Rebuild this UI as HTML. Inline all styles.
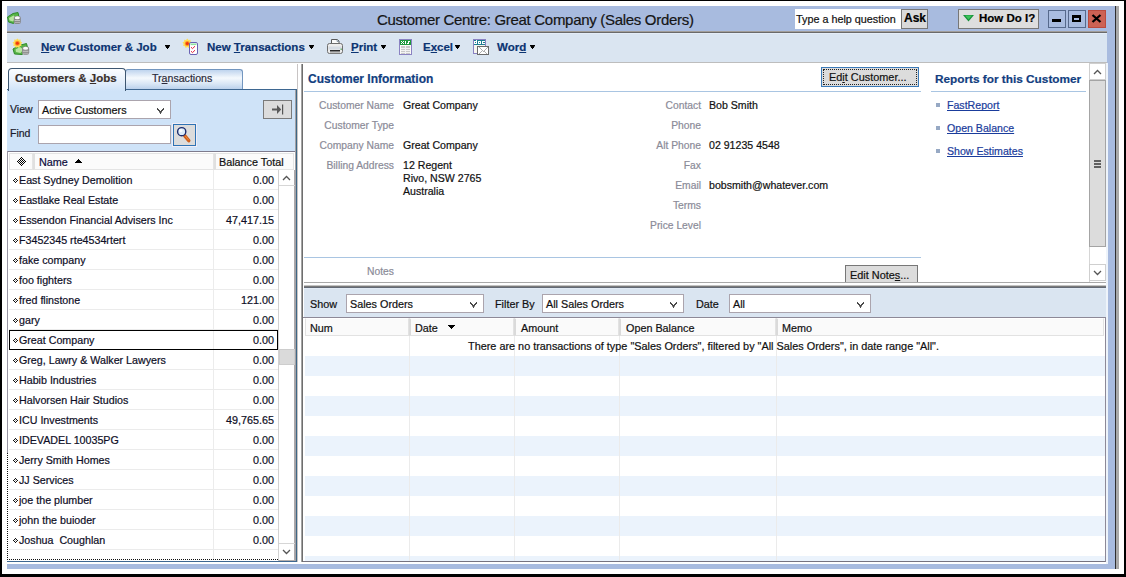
<!DOCTYPE html>
<html><head><meta charset="utf-8">
<style>
*{margin:0;padding:0;box-sizing:border-box}
html,body{width:1126px;height:577px;overflow:hidden;background:#fff;font-family:"Liberation Sans",sans-serif;font-size:11px;color:#111}
.a{position:absolute}
.t{position:absolute;white-space:nowrap;line-height:13px;-webkit-text-stroke:0.2px currentColor}
u{text-decoration:underline;text-underline-offset:1px;text-decoration-skip-ink:none}
</style></head><body>
<div class="a" style="left:0px;top:0px;width:1126px;height:1px;background:#000"></div>
<div class="a" style="left:0px;top:0px;width:2px;height:577px;background:#000"></div>
<div class="a" style="left:1124px;top:0px;width:2px;height:577px;background:#000"></div>
<div class="a" style="left:0px;top:574px;width:1126px;height:3px;background:#000"></div>
<div class="a" style="left:7px;top:6px;width:1109px;height:563px;background:#a8bbdf"></div>
<div class="a" style="left:1115px;top:6px;width:1px;height:563px;background:#2e2e2e"></div>
<div class="a" style="left:1116px;top:6px;width:3px;height:563px;background:#a9a9a9"></div>
<div class="a" style="left:7px;top:31px;width:1100px;height:1px;background:#a29e9a"></div>
<div class="a" style="left:7px;top:32px;width:1100px;height:1px;background:#6a6a6a"></div>
<svg class="a" style="left:7px;top:11px;" width="15" height="14" viewBox="0 0 15 14">
<path d="M1.5 11 L0.5 6 L6 2.5 L11 1.5 L12 6.5 L6.5 12.5 Z" fill="#58b446" stroke="#2f8a2a" stroke-width="1"/>
<path d="M2.5 9.5 L2 7 L6.5 4.5 L9 6.5 L6 10.5 Z" fill="#b8e6a0"/>
<rect x="6.8" y="5" width="7" height="8" rx="2" fill="#868686"/>
<ellipse cx="10.3" cy="6.8" rx="2.6" ry="1.5" fill="#fafafa"/>
<rect x="7.6" y="9.2" width="5.4" height="0.9" fill="#cfcfcf"/>
<rect x="7.6" y="11.2" width="5.4" height="0.9" fill="#bdbdbd"/>
</svg>
<div class="t" style="left:377px;top:13px;font-size:15px;color:#151515;letter-spacing:-0.3px">Customer Centre: Great Company (Sales Orders)</div>
<div class="a" style="left:795px;top:9px;width:106px;height:20px;background:#fff"></div>
<div class="t" style="left:796px;top:13px;font-size:10.8px;color:#111;">Type a help question</div>
<div class="a" style="left:901px;top:9px;width:27px;height:20px;background:#dadada;border:1px solid #777"></div>
<div class="t" style="left:904px;top:12px;font-size:12px;color:#000;font-weight:bold;">Ask</div>
<div class="a" style="left:958px;top:9px;width:81px;height:20px;background:#dedede;border:1px solid #777"></div>
<svg class="a" style="left:963px;top:15px;" width="11" height="7" viewBox="0 0 11 7"><path d="M0 0 L11 0 L5.5 6.5 Z" fill="#17923a"/><path d="M2 0.5 L9 0.5 L5.5 4.5 Z" fill="#3cc35a"/></svg>
<div class="t" style="left:979px;top:12px;font-size:11.5px;color:#000;font-weight:bold;">How Do I?</div>
<div class="a" style="left:1048px;top:10px;width:18px;height:18px;background:#a9bce0;border:1px solid #56698c"></div>
<div class="a" style="left:1068px;top:10px;width:18px;height:18px;background:#a9bce0;border:1px solid #56698c"></div>
<div class="a" style="left:1088px;top:10px;width:18px;height:18px;background:#cd6254;border:1px solid #bb4a3e"></div>
<div class="a" style="left:1052px;top:19px;width:9px;height:3px;background:#000"></div>
<div class="a" style="left:1072px;top:15px;width:9px;height:7px;border:2px solid #000;border-top-width:3px;background:#a9bce0"></div>
<svg class="a" style="left:1091px;top:14px;" width="11" height="9" viewBox="0 0 11 9"><path d="M1.5 1 L9.5 8 M9.5 1 L1.5 8" stroke="#000" stroke-width="2.3"/></svg>
<div class="a" style="left:7px;top:33px;width:1100px;height:29px;background:#dae5f1"></div>
<div class="a" style="left:7px;top:33px;width:1100px;height:1px;background:#e4edf8"></div>
<div class="a" style="left:7px;top:62px;width:1100px;height:1px;background:#bdbdbd"></div>
<div class="a" style="left:7px;top:63px;width:1100px;height:501px;background:#fff"></div>
<svg class="a" style="left:10px;top:36px;" width="22" height="22" viewBox="0 0 22 22">
<path d="M4.5 18 L3 13 L9 9.5 L16.5 7.5 L18 13.5 L12 18.5 Z" fill="#58b446" stroke="#2f8a2a" stroke-width="1"/>
<path d="M6 16 L5.5 13.5 L10 11 L13.5 13.5 L10.5 17 Z" fill="#b8e6a0"/>
<polygon points="7.40,2.40 8.67,3.82 10.55,3.55 10.60,5.45 12.23,6.45 11.04,7.94 11.64,9.75 9.78,10.13 9.08,11.90 7.40,11.00 5.72,11.90 5.02,10.13 3.16,9.75 3.76,7.94 2.57,6.45 4.20,5.45 4.25,3.55 6.13,3.82" fill="#ffdc55"/><circle cx="7.4" cy="7.3" r="2.5" fill="#ff9426"/><circle cx="7.4" cy="7.3" r="1.5" fill="#ee3510"/>
<rect x="12" y="10.5" width="7.2" height="8.2" rx="2.2" fill="#8a8a8a"/>
<ellipse cx="15.6" cy="12.3" rx="2.6" ry="1.5" fill="#fafafa"/>
<rect x="12.8" y="14.8" width="5.6" height="0.9" fill="#d0d0d0"/>
<rect x="12.8" y="16.8" width="5.6" height="0.9" fill="#bdbdbd"/>
</svg>
<div class="t" style="left:41px;top:41px;font-size:11.5px;color:#0c3472;font-weight:bold;"><u>N</u>ew Customer &amp; Job</div>
<svg class="a" style="left:165px;top:45px;" width="5" height="4" viewBox="0 0 5 4"><rect x="0" y="0" width="5" height="1" fill="#000"/><rect x="0.5" y="1" width="4" height="1" fill="#000"/><rect x="1" y="2" width="3" height="1" fill="#000"/><rect x="2" y="3" width="1" height="1" fill="#000"/></svg>
<svg class="a" style="left:182px;top:38px;" width="18" height="18" viewBox="0 0 18 18">
<polygon points="5.30,0.50 6.57,1.92 8.45,1.65 8.50,3.55 10.13,4.55 8.94,6.04 9.54,7.85 7.68,8.23 6.98,10.00 5.30,9.10 3.62,10.00 2.92,8.23 1.06,7.85 1.66,6.04 0.47,4.55 2.10,3.55 2.15,1.65 4.03,1.92" fill="#ffdc55"/><circle cx="5.3" cy="5.4" r="2.5" fill="#ff9426"/><circle cx="5.3" cy="5.4" r="1.5" fill="#ee3510"/>
<rect x="7.5" y="4.5" width="8" height="12" rx="1.5" fill="#fff" stroke="#6a62b4" stroke-width="1"/>
<rect x="8.5" y="5.5" width="6" height="1.6" fill="#8fe3a2"/>
<path d="M9 9.2 L10.5 10.6 L13 8.2 M9 13.2 L10.5 14.6 L13 12.2" stroke="#e0203e" stroke-width="1" fill="none"/>
</svg>
<div class="t" style="left:207px;top:41px;font-size:11.5px;color:#0c3472;font-weight:bold;">New <u>T</u>ransactions</div>
<svg class="a" style="left:309px;top:45px;" width="5" height="4" viewBox="0 0 5 4"><rect x="0" y="0" width="5" height="1" fill="#000"/><rect x="0.5" y="1" width="4" height="1" fill="#000"/><rect x="1" y="2" width="3" height="1" fill="#000"/><rect x="2" y="3" width="1" height="1" fill="#000"/></svg>
<svg class="a" style="left:324px;top:36px;" width="22" height="22" viewBox="0 0 22 22">
<path d="M7.5 3.5 L13.5 3.5 L15 5 L15 9 L7.5 9 Z" fill="#fbfbfb" stroke="#5a5a5a" stroke-width="1"/>
<path d="M13 3.5 L13 5.5 L15 5.5" fill="#c8d2dc" stroke="#6a7a8a" stroke-width="0.6"/>
<rect x="3.5" y="7.5" width="15" height="10" rx="2" fill="#ececec" stroke="#6e6e6e" stroke-width="1"/>
<rect x="4.5" y="10.5" width="13" height="3" fill="#d6dce4"/>
<rect x="6" y="14" width="10" height="1.6" fill="#2a2a2a"/>
<rect x="6" y="15.8" width="10" height="1.4" fill="#bdbdbd"/>
<rect x="16.6" y="12.6" width="1.2" height="1.2" fill="#3a9a3a"/>
</svg>
<div class="t" style="left:351px;top:41px;font-size:11.5px;color:#0c3472;font-weight:bold;"><u>P</u>rint</div>
<svg class="a" style="left:381px;top:45px;" width="5" height="4" viewBox="0 0 5 4"><rect x="0" y="0" width="5" height="1" fill="#000"/><rect x="0.5" y="1" width="4" height="1" fill="#000"/><rect x="1" y="2" width="3" height="1" fill="#000"/><rect x="2" y="3" width="1" height="1" fill="#000"/></svg>
<svg class="a" style="left:399px;top:39px;shape-rendering:crispEdges" width="13" height="16" viewBox="0 0 13 16">
<rect x="0.5" y="0.5" width="12" height="15" fill="#fbfaf6" stroke="#8a82c2" stroke-width="1"/>
<rect x="1" y="1" width="11" height="5" fill="#1f9a3c"/>
<rect x="2" y="2" width="1" height="1" fill="#fff"/><rect x="4" y="2" width="1" height="1" fill="#fff"/><rect x="3" y="3" width="1" height="1" fill="#fff"/><rect x="2" y="4" width="1" height="1" fill="#fff"/><rect x="4" y="4" width="1" height="1" fill="#fff"/>
<rect x="6" y="1.6" width="1" height="3.4" fill="#fff"/>
<rect x="9" y="2" width="2" height="1" fill="#fff"/><rect x="9" y="3" width="1" height="1" fill="#fff"/><rect x="8" y="4" width="2" height="1" fill="#fff"/>
<rect x="2" y="7" width="9" height="8" fill="#c9c9c9"/>
<rect x="2" y="9" width="9" height="1" fill="#f2f2f2"/>
<rect x="2" y="11" width="9" height="1" fill="#f2f2f2"/>
<rect x="2" y="13" width="9" height="1" fill="#f2f2f2"/>
<rect x="6" y="7" width="1" height="8" fill="#f2f2f2"/>
</svg>
<div class="t" style="left:423px;top:41px;font-size:11.5px;color:#0c3472;font-weight:bold;">E<u>x</u>cel</div>
<svg class="a" style="left:455px;top:45px;" width="5" height="4" viewBox="0 0 5 4"><rect x="0" y="0" width="5" height="1" fill="#000"/><rect x="0.5" y="1" width="4" height="1" fill="#000"/><rect x="1" y="2" width="3" height="1" fill="#000"/><rect x="2" y="3" width="1" height="1" fill="#000"/></svg>
<svg class="a" style="left:473px;top:39px;shape-rendering:crispEdges" width="16" height="16" viewBox="0 0 16 16">
<rect x="0.5" y="0.5" width="12" height="14" fill="#f8f6f0" stroke="#8a82c2" stroke-width="1"/>
<rect x="1" y="1" width="11" height="5" fill="#1e7f92"/>
<rect x="3" y="1" width="1" height="1" fill="#fff"/><rect x="3" y="2" width="1" height="1" fill="#fff"/><rect x="1" y="2" width="1" height="1" fill="#fff"/><rect x="2" y="2" width="1" height="1" fill="#fff"/><rect x="1" y="3" width="1" height="1" fill="#fff"/><rect x="3" y="3" width="1" height="1" fill="#fff"/><rect x="1" y="4" width="1" height="1" fill="#fff"/><rect x="2" y="4" width="1" height="1" fill="#fff"/><rect x="3" y="4" width="1" height="1" fill="#fff"/><rect x="5" y="2" width="1" height="1" fill="#fff"/><rect x="6" y="2" width="1" height="1" fill="#fff"/><rect x="7" y="2" width="1" height="1" fill="#fff"/><rect x="5" y="3" width="1" height="1" fill="#fff"/><rect x="7" y="3" width="1" height="1" fill="#fff"/><rect x="5" y="4" width="1" height="1" fill="#fff"/><rect x="6" y="4" width="1" height="1" fill="#fff"/><rect x="7" y="4" width="1" height="1" fill="#fff"/><rect x="9" y="2" width="1" height="1" fill="#fff"/><rect x="10" y="2" width="1" height="1" fill="#fff"/><rect x="11" y="2" width="1" height="1" fill="#fff"/><rect x="9" y="3" width="1" height="1" fill="#fff"/><rect x="9" y="4" width="1" height="1" fill="#fff"/><rect x="10" y="4" width="1" height="1" fill="#fff"/><rect x="11" y="4" width="1" height="1" fill="#fff"/>
<rect x="4.5" y="7.5" width="11" height="8" fill="#fff" stroke="#6a6a6a" stroke-width="1"/>
<path d="M5.5 8.5 L10 12.5 L14.5 8.5 M5.5 14.5 L8.5 11.5 M14.5 14.5 L11.5 11.5" stroke="#9a9a9a" stroke-width="0.8" fill="none"/>
</svg>
<div class="t" style="left:497px;top:41px;font-size:11.5px;color:#0c3472;font-weight:bold;">Wor<u>d</u></div>
<svg class="a" style="left:530px;top:45px;" width="5" height="4" viewBox="0 0 5 4"><rect x="0" y="0" width="5" height="1" fill="#000"/><rect x="0.5" y="1" width="4" height="1" fill="#000"/><rect x="1" y="2" width="3" height="1" fill="#000"/><rect x="2" y="3" width="1" height="1" fill="#000"/></svg>
<div class="a" style="left:125px;top:69px;width:118px;height:21px;border:1px solid #7396bf;border-bottom:none;border-radius:3px 3px 0 0;background:linear-gradient(#bfd4ee 0%,#f5f9fd 40%,#d8e6f5 70%,#b6cdea 100%)"></div>
<div class="t" style="left:152px;top:72px;font-size:10.6px;color:#2b2b3b;">Tr<u>a</u>nsactions</div>
<div class="a" style="left:7px;top:89px;width:290px;height:473px;background:#cfe3f8;border-top:1px solid #3e6791;border-right:1px solid #3e6785;border-bottom:1px solid #3e6791"></div>
<div class="a" style="left:8px;top:68px;width:118px;height:23px;border:1px solid #3d5670;border-bottom:none;border-radius:4px 4px 0 0;background:linear-gradient(#fbfdff 0%,#e6f0fb 55%,#cfe3f8 100%)"></div>
<div class="t" style="left:15px;top:72px;font-size:11.5px;color:#392f2b;font-weight:bold;">Customers &amp; <u>J</u>obs</div>
<div class="t" style="left:10px;top:103px;font-size:10.5px;color:#1a1a2a;">View</div>
<div class="a" style="left:38px;top:100px;width:133px;height:19px;background:#fff;border:1px solid #aba4ad"></div>
<div class="t" style="left:42px;top:104px;font-size:10.8px;color:#111;">Active Customers</div>
<svg class="a" style="left:157px;top:108px;shape-rendering:crispEdges" width="7" height="6" viewBox="0 0 7 6"><rect x="0" y="0" width="1" height="1" fill="#4a4a4a"/><rect x="6" y="0" width="1" height="1" fill="#4a4a4a"/><rect x="0" y="1" width="1" height="1" fill="#4a4a4a"/><rect x="1" y="1" width="1" height="1" fill="#4a4a4a"/><rect x="5" y="1" width="1" height="1" fill="#4a4a4a"/><rect x="6" y="1" width="1" height="1" fill="#4a4a4a"/><rect x="1" y="2" width="1" height="1" fill="#4a4a4a"/><rect x="2" y="2" width="1" height="1" fill="#4a4a4a"/><rect x="4" y="2" width="1" height="1" fill="#4a4a4a"/><rect x="5" y="2" width="1" height="1" fill="#4a4a4a"/><rect x="2" y="3" width="1" height="1" fill="#4a4a4a"/><rect x="3" y="3" width="1" height="1" fill="#4a4a4a"/><rect x="4" y="3" width="1" height="1" fill="#4a4a4a"/><rect x="3" y="4" width="1" height="1" fill="#4a4a4a"/><rect x="3" y="5" width="1" height="1" fill="#4a4a4a"/><rect x="2" y="4" width="1" height="1" fill="#9a9a9a"/><rect x="4" y="4" width="1" height="1" fill="#9a9a9a"/></svg>
<div class="a" style="left:263px;top:100px;width:29px;height:19px;background:#dcdcdc;border:1px solid #7a7a7a"></div>
<svg class="a" style="left:271px;top:103px;" width="13" height="13" viewBox="0 0 13 13"><rect x="1" y="5.5" width="6" height="2" fill="#5a5a5a"/><path d="M6 2 L10.2 6.5 L6 11 Z" fill="#5a5a5a"/><rect x="11" y="1.5" width="1.2" height="10" fill="#555"/></svg>
<div class="t" style="left:10px;top:127px;font-size:10.5px;color:#1a1a2a;">Find</div>
<div class="a" style="left:38px;top:125px;width:133px;height:19px;background:#fff;border:1px solid #aba4ad"></div>
<div class="a" style="left:172px;top:123px;width:25px;height:24px;background:#f1edf5"></div>
<div class="a" style="left:173px;top:124px;width:23px;height:22px;background:#dcdcdc;border:1px solid #2e73b5"></div>
<svg class="a" style="left:176px;top:126px;" width="18" height="18" viewBox="0 0 18 18">
<path d="M8.6 9.6 L12.8 14.6" stroke="#cf5f1c" stroke-width="3.4" stroke-linecap="round"/>
<path d="M9.4 10.2 L12.4 13.8" stroke="#f08a3a" stroke-width="1" stroke-linecap="round"/>
<circle cx="5.7" cy="5.7" r="4.1" fill="#dcecf9" stroke="#1b2a6c" stroke-width="1.4"/>
<circle cx="4.8" cy="4.6" r="1.7" fill="#fff" opacity="0.85"/>
</svg>
<div class="a" style="left:7px;top:151px;width:288px;height:410px;background:#fff"></div>
<div class="a" style="left:295px;top:90px;width:1px;height:471px;background:#a4a2a6"></div>
<div class="a" style="left:7px;top:151px;width:288px;height:1px;background:#7e7b8d"></div>
<div class="a" style="left:7px;top:151px;width:1px;height:302px;background:#9895a3"></div>
<div class="a" style="left:9px;top:153px;width:24px;height:17px;background:#fbfbfb;border:1px solid #e4e4e4"></div>
<div class="a" style="left:33px;top:153px;width:181px;height:17px;background:#fbfbfb;border:1px solid #e4e4e4;border-left:2px solid #e0e0e0"></div>
<div class="a" style="left:214px;top:153px;width:80px;height:17px;background:#fbfbfb;border:1px solid #e4e4e4;border-left:2px solid #e0e0e0"></div>
<svg class="a" style="left:17px;top:157px;shape-rendering:crispEdges" width="9" height="9" viewBox="0 0 9 9"><rect x="4" y="0" width="1" height="1" fill="#000"/><rect x="3" y="1" width="1" height="1" fill="#000"/><rect x="5" y="1" width="1" height="1" fill="#000"/><rect x="2" y="2" width="1" height="1" fill="#000"/><rect x="4" y="2" width="1" height="1" fill="#000"/><rect x="6" y="2" width="1" height="1" fill="#000"/><rect x="1" y="3" width="1" height="1" fill="#000"/><rect x="3" y="3" width="1" height="1" fill="#000"/><rect x="5" y="3" width="1" height="1" fill="#000"/><rect x="7" y="3" width="1" height="1" fill="#000"/><rect x="0" y="4" width="1" height="1" fill="#000"/><rect x="2" y="4" width="1" height="1" fill="#000"/><rect x="4" y="4" width="1" height="1" fill="#000"/><rect x="6" y="4" width="1" height="1" fill="#000"/><rect x="8" y="4" width="1" height="1" fill="#000"/><rect x="1" y="5" width="1" height="1" fill="#000"/><rect x="3" y="5" width="1" height="1" fill="#000"/><rect x="5" y="5" width="1" height="1" fill="#000"/><rect x="7" y="5" width="1" height="1" fill="#000"/><rect x="2" y="6" width="1" height="1" fill="#000"/><rect x="4" y="6" width="1" height="1" fill="#000"/><rect x="6" y="6" width="1" height="1" fill="#000"/><rect x="3" y="7" width="1" height="1" fill="#000"/><rect x="5" y="7" width="1" height="1" fill="#000"/><rect x="4" y="8" width="1" height="1" fill="#000"/></svg>
<div class="t" style="left:39px;top:156px;font-size:10.8px;color:#0c0c3c;">Name</div>
<svg class="a" style="left:75px;top:159px;shape-rendering:crispEdges" width="7" height="4" viewBox="0 0 7 4"><rect x="0" y="3" width="7" height="1" fill="#000"/><rect x="1" y="2" width="5" height="1" fill="#000"/><rect x="2" y="1" width="3" height="1" fill="#000"/><rect x="3" y="0" width="1" height="1" fill="#000"/></svg>
<div class="t" style="left:219px;top:156px;font-size:10.8px;color:#111;">Balance Total</div>
<div class="a" style="left:213px;top:170px;width:1px;height:390px;background:#ececec"></div>
<div class="a" style="left:9px;top:189px;width:269px;height:1px;background:#ebebeb"></div>
<svg class="a" style="left:13px;top:178px;shape-rendering:crispEdges" width="5" height="5" viewBox="0 0 5 5"><rect x="2" y="0" width="1" height="1" fill="#111"/><rect x="1" y="1" width="1" height="1" fill="#111"/><rect x="3" y="1" width="1" height="1" fill="#111"/><rect x="0" y="2" width="1" height="1" fill="#111"/><rect x="4" y="2" width="1" height="1" fill="#111"/><rect x="1" y="3" width="1" height="1" fill="#111"/><rect x="3" y="3" width="1" height="1" fill="#111"/><rect x="2" y="4" width="1" height="1" fill="#111"/><rect x="2" y="2" width="1" height="1" fill="#aaa"/></svg>
<div class="t" style="left:19px;top:174px;font-size:10.7px;color:#0e0e26;">East Sydney Demolition</div>
<div class="t" style="left:204px;width:70px;text-align:right;top:174px;font-size:10.8px;color:#0e0e26;">0.00</div>
<div class="a" style="left:9px;top:209px;width:269px;height:1px;background:#ebebeb"></div>
<svg class="a" style="left:13px;top:198px;shape-rendering:crispEdges" width="5" height="5" viewBox="0 0 5 5"><rect x="2" y="0" width="1" height="1" fill="#111"/><rect x="1" y="1" width="1" height="1" fill="#111"/><rect x="3" y="1" width="1" height="1" fill="#111"/><rect x="0" y="2" width="1" height="1" fill="#111"/><rect x="4" y="2" width="1" height="1" fill="#111"/><rect x="1" y="3" width="1" height="1" fill="#111"/><rect x="3" y="3" width="1" height="1" fill="#111"/><rect x="2" y="4" width="1" height="1" fill="#111"/><rect x="2" y="2" width="1" height="1" fill="#aaa"/></svg>
<div class="t" style="left:19px;top:194px;font-size:10.7px;color:#0e0e26;">Eastlake Real Estate</div>
<div class="t" style="left:204px;width:70px;text-align:right;top:194px;font-size:10.8px;color:#0e0e26;">0.00</div>
<div class="a" style="left:9px;top:229px;width:269px;height:1px;background:#ebebeb"></div>
<svg class="a" style="left:13px;top:218px;shape-rendering:crispEdges" width="5" height="5" viewBox="0 0 5 5"><rect x="2" y="0" width="1" height="1" fill="#111"/><rect x="1" y="1" width="1" height="1" fill="#111"/><rect x="3" y="1" width="1" height="1" fill="#111"/><rect x="0" y="2" width="1" height="1" fill="#111"/><rect x="4" y="2" width="1" height="1" fill="#111"/><rect x="1" y="3" width="1" height="1" fill="#111"/><rect x="3" y="3" width="1" height="1" fill="#111"/><rect x="2" y="4" width="1" height="1" fill="#111"/><rect x="2" y="2" width="1" height="1" fill="#aaa"/></svg>
<div class="t" style="left:19px;top:214px;font-size:10.7px;color:#0e0e26;">Essendon Financial Advisers Inc</div>
<div class="t" style="left:204px;width:70px;text-align:right;top:214px;font-size:10.8px;color:#0e0e26;">47,417.15</div>
<div class="a" style="left:9px;top:249px;width:269px;height:1px;background:#ebebeb"></div>
<svg class="a" style="left:13px;top:238px;shape-rendering:crispEdges" width="5" height="5" viewBox="0 0 5 5"><rect x="2" y="0" width="1" height="1" fill="#111"/><rect x="1" y="1" width="1" height="1" fill="#111"/><rect x="3" y="1" width="1" height="1" fill="#111"/><rect x="0" y="2" width="1" height="1" fill="#111"/><rect x="4" y="2" width="1" height="1" fill="#111"/><rect x="1" y="3" width="1" height="1" fill="#111"/><rect x="3" y="3" width="1" height="1" fill="#111"/><rect x="2" y="4" width="1" height="1" fill="#111"/><rect x="2" y="2" width="1" height="1" fill="#aaa"/></svg>
<div class="t" style="left:19px;top:234px;font-size:10.7px;color:#0e0e26;">F3452345 rte4534rtert</div>
<div class="t" style="left:204px;width:70px;text-align:right;top:234px;font-size:10.8px;color:#0e0e26;">0.00</div>
<div class="a" style="left:9px;top:269px;width:269px;height:1px;background:#ebebeb"></div>
<svg class="a" style="left:13px;top:258px;shape-rendering:crispEdges" width="5" height="5" viewBox="0 0 5 5"><rect x="2" y="0" width="1" height="1" fill="#111"/><rect x="1" y="1" width="1" height="1" fill="#111"/><rect x="3" y="1" width="1" height="1" fill="#111"/><rect x="0" y="2" width="1" height="1" fill="#111"/><rect x="4" y="2" width="1" height="1" fill="#111"/><rect x="1" y="3" width="1" height="1" fill="#111"/><rect x="3" y="3" width="1" height="1" fill="#111"/><rect x="2" y="4" width="1" height="1" fill="#111"/><rect x="2" y="2" width="1" height="1" fill="#aaa"/></svg>
<div class="t" style="left:19px;top:254px;font-size:10.7px;color:#0e0e26;">fake company</div>
<div class="t" style="left:204px;width:70px;text-align:right;top:254px;font-size:10.8px;color:#0e0e26;">0.00</div>
<div class="a" style="left:9px;top:289px;width:269px;height:1px;background:#ebebeb"></div>
<svg class="a" style="left:13px;top:278px;shape-rendering:crispEdges" width="5" height="5" viewBox="0 0 5 5"><rect x="2" y="0" width="1" height="1" fill="#111"/><rect x="1" y="1" width="1" height="1" fill="#111"/><rect x="3" y="1" width="1" height="1" fill="#111"/><rect x="0" y="2" width="1" height="1" fill="#111"/><rect x="4" y="2" width="1" height="1" fill="#111"/><rect x="1" y="3" width="1" height="1" fill="#111"/><rect x="3" y="3" width="1" height="1" fill="#111"/><rect x="2" y="4" width="1" height="1" fill="#111"/><rect x="2" y="2" width="1" height="1" fill="#aaa"/></svg>
<div class="t" style="left:19px;top:274px;font-size:10.7px;color:#0e0e26;">foo fighters</div>
<div class="t" style="left:204px;width:70px;text-align:right;top:274px;font-size:10.8px;color:#0e0e26;">0.00</div>
<div class="a" style="left:9px;top:309px;width:269px;height:1px;background:#ebebeb"></div>
<svg class="a" style="left:13px;top:298px;shape-rendering:crispEdges" width="5" height="5" viewBox="0 0 5 5"><rect x="2" y="0" width="1" height="1" fill="#111"/><rect x="1" y="1" width="1" height="1" fill="#111"/><rect x="3" y="1" width="1" height="1" fill="#111"/><rect x="0" y="2" width="1" height="1" fill="#111"/><rect x="4" y="2" width="1" height="1" fill="#111"/><rect x="1" y="3" width="1" height="1" fill="#111"/><rect x="3" y="3" width="1" height="1" fill="#111"/><rect x="2" y="4" width="1" height="1" fill="#111"/><rect x="2" y="2" width="1" height="1" fill="#aaa"/></svg>
<div class="t" style="left:19px;top:294px;font-size:10.7px;color:#0e0e26;">fred flinstone</div>
<div class="t" style="left:204px;width:70px;text-align:right;top:294px;font-size:10.8px;color:#0e0e26;">121.00</div>
<div class="a" style="left:9px;top:329px;width:269px;height:1px;background:#ebebeb"></div>
<svg class="a" style="left:13px;top:318px;shape-rendering:crispEdges" width="5" height="5" viewBox="0 0 5 5"><rect x="2" y="0" width="1" height="1" fill="#111"/><rect x="1" y="1" width="1" height="1" fill="#111"/><rect x="3" y="1" width="1" height="1" fill="#111"/><rect x="0" y="2" width="1" height="1" fill="#111"/><rect x="4" y="2" width="1" height="1" fill="#111"/><rect x="1" y="3" width="1" height="1" fill="#111"/><rect x="3" y="3" width="1" height="1" fill="#111"/><rect x="2" y="4" width="1" height="1" fill="#111"/><rect x="2" y="2" width="1" height="1" fill="#aaa"/></svg>
<div class="t" style="left:19px;top:314px;font-size:10.7px;color:#0e0e26;">gary</div>
<div class="t" style="left:204px;width:70px;text-align:right;top:314px;font-size:10.8px;color:#0e0e26;">0.00</div>
<div class="a" style="left:9px;top:349px;width:269px;height:1px;background:#ebebeb"></div>
<svg class="a" style="left:13px;top:338px;shape-rendering:crispEdges" width="5" height="5" viewBox="0 0 5 5"><rect x="2" y="0" width="1" height="1" fill="#111"/><rect x="1" y="1" width="1" height="1" fill="#111"/><rect x="3" y="1" width="1" height="1" fill="#111"/><rect x="0" y="2" width="1" height="1" fill="#111"/><rect x="4" y="2" width="1" height="1" fill="#111"/><rect x="1" y="3" width="1" height="1" fill="#111"/><rect x="3" y="3" width="1" height="1" fill="#111"/><rect x="2" y="4" width="1" height="1" fill="#111"/><rect x="2" y="2" width="1" height="1" fill="#aaa"/></svg>
<div class="t" style="left:19px;top:334px;font-size:10.7px;color:#0e0e26;">Great Company</div>
<div class="t" style="left:204px;width:70px;text-align:right;top:334px;font-size:10.8px;color:#0e0e26;">0.00</div>
<div class="a" style="left:9px;top:369px;width:269px;height:1px;background:#ebebeb"></div>
<svg class="a" style="left:13px;top:358px;shape-rendering:crispEdges" width="5" height="5" viewBox="0 0 5 5"><rect x="2" y="0" width="1" height="1" fill="#111"/><rect x="1" y="1" width="1" height="1" fill="#111"/><rect x="3" y="1" width="1" height="1" fill="#111"/><rect x="0" y="2" width="1" height="1" fill="#111"/><rect x="4" y="2" width="1" height="1" fill="#111"/><rect x="1" y="3" width="1" height="1" fill="#111"/><rect x="3" y="3" width="1" height="1" fill="#111"/><rect x="2" y="4" width="1" height="1" fill="#111"/><rect x="2" y="2" width="1" height="1" fill="#aaa"/></svg>
<div class="t" style="left:19px;top:354px;font-size:10.7px;color:#0e0e26;">Greg, Lawry &amp; Walker Lawyers</div>
<div class="t" style="left:204px;width:70px;text-align:right;top:354px;font-size:10.8px;color:#0e0e26;">0.00</div>
<div class="a" style="left:9px;top:389px;width:269px;height:1px;background:#ebebeb"></div>
<svg class="a" style="left:13px;top:378px;shape-rendering:crispEdges" width="5" height="5" viewBox="0 0 5 5"><rect x="2" y="0" width="1" height="1" fill="#111"/><rect x="1" y="1" width="1" height="1" fill="#111"/><rect x="3" y="1" width="1" height="1" fill="#111"/><rect x="0" y="2" width="1" height="1" fill="#111"/><rect x="4" y="2" width="1" height="1" fill="#111"/><rect x="1" y="3" width="1" height="1" fill="#111"/><rect x="3" y="3" width="1" height="1" fill="#111"/><rect x="2" y="4" width="1" height="1" fill="#111"/><rect x="2" y="2" width="1" height="1" fill="#aaa"/></svg>
<div class="t" style="left:19px;top:374px;font-size:10.7px;color:#0e0e26;">Habib Industries</div>
<div class="t" style="left:204px;width:70px;text-align:right;top:374px;font-size:10.8px;color:#0e0e26;">0.00</div>
<div class="a" style="left:9px;top:409px;width:269px;height:1px;background:#ebebeb"></div>
<svg class="a" style="left:13px;top:398px;shape-rendering:crispEdges" width="5" height="5" viewBox="0 0 5 5"><rect x="2" y="0" width="1" height="1" fill="#111"/><rect x="1" y="1" width="1" height="1" fill="#111"/><rect x="3" y="1" width="1" height="1" fill="#111"/><rect x="0" y="2" width="1" height="1" fill="#111"/><rect x="4" y="2" width="1" height="1" fill="#111"/><rect x="1" y="3" width="1" height="1" fill="#111"/><rect x="3" y="3" width="1" height="1" fill="#111"/><rect x="2" y="4" width="1" height="1" fill="#111"/><rect x="2" y="2" width="1" height="1" fill="#aaa"/></svg>
<div class="t" style="left:19px;top:394px;font-size:10.7px;color:#0e0e26;">Halvorsen Hair Studios</div>
<div class="t" style="left:204px;width:70px;text-align:right;top:394px;font-size:10.8px;color:#0e0e26;">0.00</div>
<div class="a" style="left:9px;top:429px;width:269px;height:1px;background:#ebebeb"></div>
<svg class="a" style="left:13px;top:418px;shape-rendering:crispEdges" width="5" height="5" viewBox="0 0 5 5"><rect x="2" y="0" width="1" height="1" fill="#111"/><rect x="1" y="1" width="1" height="1" fill="#111"/><rect x="3" y="1" width="1" height="1" fill="#111"/><rect x="0" y="2" width="1" height="1" fill="#111"/><rect x="4" y="2" width="1" height="1" fill="#111"/><rect x="1" y="3" width="1" height="1" fill="#111"/><rect x="3" y="3" width="1" height="1" fill="#111"/><rect x="2" y="4" width="1" height="1" fill="#111"/><rect x="2" y="2" width="1" height="1" fill="#aaa"/></svg>
<div class="t" style="left:19px;top:414px;font-size:10.7px;color:#0e0e26;">ICU Investments</div>
<div class="t" style="left:204px;width:70px;text-align:right;top:414px;font-size:10.8px;color:#0e0e26;">49,765.65</div>
<div class="a" style="left:9px;top:449px;width:269px;height:1px;background:#ebebeb"></div>
<svg class="a" style="left:13px;top:438px;shape-rendering:crispEdges" width="5" height="5" viewBox="0 0 5 5"><rect x="2" y="0" width="1" height="1" fill="#111"/><rect x="1" y="1" width="1" height="1" fill="#111"/><rect x="3" y="1" width="1" height="1" fill="#111"/><rect x="0" y="2" width="1" height="1" fill="#111"/><rect x="4" y="2" width="1" height="1" fill="#111"/><rect x="1" y="3" width="1" height="1" fill="#111"/><rect x="3" y="3" width="1" height="1" fill="#111"/><rect x="2" y="4" width="1" height="1" fill="#111"/><rect x="2" y="2" width="1" height="1" fill="#aaa"/></svg>
<div class="t" style="left:19px;top:434px;font-size:10.7px;color:#0e0e26;">IDEVADEL 10035PG</div>
<div class="t" style="left:204px;width:70px;text-align:right;top:434px;font-size:10.8px;color:#0e0e26;">0.00</div>
<div class="a" style="left:9px;top:469px;width:269px;height:1px;background:#ebebeb"></div>
<svg class="a" style="left:13px;top:458px;shape-rendering:crispEdges" width="5" height="5" viewBox="0 0 5 5"><rect x="2" y="0" width="1" height="1" fill="#111"/><rect x="1" y="1" width="1" height="1" fill="#111"/><rect x="3" y="1" width="1" height="1" fill="#111"/><rect x="0" y="2" width="1" height="1" fill="#111"/><rect x="4" y="2" width="1" height="1" fill="#111"/><rect x="1" y="3" width="1" height="1" fill="#111"/><rect x="3" y="3" width="1" height="1" fill="#111"/><rect x="2" y="4" width="1" height="1" fill="#111"/><rect x="2" y="2" width="1" height="1" fill="#aaa"/></svg>
<div class="t" style="left:19px;top:454px;font-size:10.7px;color:#0e0e26;">Jerry Smith Homes</div>
<div class="t" style="left:204px;width:70px;text-align:right;top:454px;font-size:10.8px;color:#0e0e26;">0.00</div>
<div class="a" style="left:9px;top:489px;width:269px;height:1px;background:#ebebeb"></div>
<svg class="a" style="left:13px;top:478px;shape-rendering:crispEdges" width="5" height="5" viewBox="0 0 5 5"><rect x="2" y="0" width="1" height="1" fill="#111"/><rect x="1" y="1" width="1" height="1" fill="#111"/><rect x="3" y="1" width="1" height="1" fill="#111"/><rect x="0" y="2" width="1" height="1" fill="#111"/><rect x="4" y="2" width="1" height="1" fill="#111"/><rect x="1" y="3" width="1" height="1" fill="#111"/><rect x="3" y="3" width="1" height="1" fill="#111"/><rect x="2" y="4" width="1" height="1" fill="#111"/><rect x="2" y="2" width="1" height="1" fill="#aaa"/></svg>
<div class="t" style="left:19px;top:474px;font-size:10.7px;color:#0e0e26;">JJ Services</div>
<div class="t" style="left:204px;width:70px;text-align:right;top:474px;font-size:10.8px;color:#0e0e26;">0.00</div>
<div class="a" style="left:9px;top:509px;width:269px;height:1px;background:#ebebeb"></div>
<svg class="a" style="left:13px;top:498px;shape-rendering:crispEdges" width="5" height="5" viewBox="0 0 5 5"><rect x="2" y="0" width="1" height="1" fill="#111"/><rect x="1" y="1" width="1" height="1" fill="#111"/><rect x="3" y="1" width="1" height="1" fill="#111"/><rect x="0" y="2" width="1" height="1" fill="#111"/><rect x="4" y="2" width="1" height="1" fill="#111"/><rect x="1" y="3" width="1" height="1" fill="#111"/><rect x="3" y="3" width="1" height="1" fill="#111"/><rect x="2" y="4" width="1" height="1" fill="#111"/><rect x="2" y="2" width="1" height="1" fill="#aaa"/></svg>
<div class="t" style="left:19px;top:494px;font-size:10.7px;color:#0e0e26;">joe the plumber</div>
<div class="t" style="left:204px;width:70px;text-align:right;top:494px;font-size:10.8px;color:#0e0e26;">0.00</div>
<div class="a" style="left:9px;top:529px;width:269px;height:1px;background:#ebebeb"></div>
<svg class="a" style="left:13px;top:518px;shape-rendering:crispEdges" width="5" height="5" viewBox="0 0 5 5"><rect x="2" y="0" width="1" height="1" fill="#111"/><rect x="1" y="1" width="1" height="1" fill="#111"/><rect x="3" y="1" width="1" height="1" fill="#111"/><rect x="0" y="2" width="1" height="1" fill="#111"/><rect x="4" y="2" width="1" height="1" fill="#111"/><rect x="1" y="3" width="1" height="1" fill="#111"/><rect x="3" y="3" width="1" height="1" fill="#111"/><rect x="2" y="4" width="1" height="1" fill="#111"/><rect x="2" y="2" width="1" height="1" fill="#aaa"/></svg>
<div class="t" style="left:19px;top:514px;font-size:10.7px;color:#0e0e26;">john the buioder</div>
<div class="t" style="left:204px;width:70px;text-align:right;top:514px;font-size:10.8px;color:#0e0e26;">0.00</div>
<div class="a" style="left:9px;top:549px;width:269px;height:1px;background:#ebebeb"></div>
<svg class="a" style="left:13px;top:538px;shape-rendering:crispEdges" width="5" height="5" viewBox="0 0 5 5"><rect x="2" y="0" width="1" height="1" fill="#111"/><rect x="1" y="1" width="1" height="1" fill="#111"/><rect x="3" y="1" width="1" height="1" fill="#111"/><rect x="0" y="2" width="1" height="1" fill="#111"/><rect x="4" y="2" width="1" height="1" fill="#111"/><rect x="1" y="3" width="1" height="1" fill="#111"/><rect x="3" y="3" width="1" height="1" fill="#111"/><rect x="2" y="4" width="1" height="1" fill="#111"/><rect x="2" y="2" width="1" height="1" fill="#aaa"/></svg>
<div class="t" style="left:19px;top:534px;font-size:10.7px;color:#0e0e26;">Joshua&nbsp; Coughlan</div>
<div class="t" style="left:204px;width:70px;text-align:right;top:534px;font-size:10.8px;color:#0e0e26;">0.00</div>
<div class="a" style="left:9px;top:330px;width:269px;height:20px;border:1px solid #000"></div>
<div class="a" style="left:278px;top:170px;width:17px;height:391px;background:#fff;border-left:1px solid #d2d2d2;border-right:1px solid #aca8aa;border-bottom:1px solid #b5b0ae"></div>
<div class="a" style="left:279px;top:185px;width:16px;height:1px;background:#d6d6d6"></div>
<svg class="a" style="left:282px;top:175px;" width="9" height="6" viewBox="0 0 9 6"><path d="M1 5 L4.5 1.5 L8 5" stroke="#555" stroke-width="1.3" fill="none"/></svg>
<div class="a" style="left:279px;top:349px;width:16px;height:16px;background:#dadada;border:1px solid #cdcdcd"></div>
<div class="a" style="left:279px;top:543px;width:16px;height:1px;background:#d6d6d6"></div>
<svg class="a" style="left:282px;top:549px;" width="9" height="6" viewBox="0 0 9 6"><path d="M1 1 L4.5 4.5 L8 1" stroke="#555" stroke-width="1.3" fill="none"/></svg>
<div class="a" style="left:7px;top:453px;width:1px;height:107px;border-left:1px dotted #111"></div>
<div class="a" style="left:7px;top:559px;width:271px;height:1px;border-top:1px dotted #111"></div>
<div class="a" style="left:297px;top:64px;width:1px;height:498px;background:#c8c4c4"></div>
<div class="a" style="left:301px;top:64px;width:1px;height:498px;background:#a4a4a4"></div>
<div class="a" style="left:302px;top:64px;width:1px;height:498px;background:#6e6e6e"></div>
<div class="t" style="left:308px;top:73px;font-size:12px;color:#123e80;font-weight:bold;">Customer Information</div>
<div class="a" style="left:304px;top:91px;width:617px;height:1px;background:#a9c5e2"></div>
<div class="a" style="left:821px;top:67px;width:98px;height:20px;background:#dcdcdc;border:1px solid #3a7ab8"></div>
<div class="a" style="left:823px;top:69px;width:94px;height:16px;border:1px dotted #222"></div>
<div class="t" style="left:829px;top:71px;font-size:10.9px;color:#111;">Ed<u>i</u>t Customer...</div>
<div class="t" style="left:244px;width:150px;text-align:right;top:99px;font-size:10.3px;color:#8b8b98;">Customer Name</div>
<div class="t" style="left:244px;width:150px;text-align:right;top:119px;font-size:10.3px;color:#8b8b98;">Customer Type</div>
<div class="t" style="left:244px;width:150px;text-align:right;top:139px;font-size:10.3px;color:#8b8b98;">Company Name</div>
<div class="t" style="left:244px;width:150px;text-align:right;top:159px;font-size:10.3px;color:#8b8b98;">Billing Address</div>
<div class="t" style="left:403px;top:99px;font-size:10.6px;color:#111;">Great Company</div>
<div class="t" style="left:403px;top:139px;font-size:10.6px;color:#111;">Great Company</div>
<div class="t" style="left:403px;top:159px;font-size:10.6px;color:#111;">12 Regent</div>
<div class="t" style="left:403px;top:172px;font-size:10.6px;color:#111;">Rivo, NSW 2765</div>
<div class="t" style="left:403px;top:185px;font-size:10.6px;color:#111;">Australia</div>
<div class="t" style="left:551px;width:150px;text-align:right;top:99px;font-size:10.3px;color:#8b8b98;">Contact</div>
<div class="t" style="left:551px;width:150px;text-align:right;top:119px;font-size:10.3px;color:#8b8b98;">Phone</div>
<div class="t" style="left:551px;width:150px;text-align:right;top:139px;font-size:10.3px;color:#8b8b98;">Alt Phone</div>
<div class="t" style="left:551px;width:150px;text-align:right;top:159px;font-size:10.3px;color:#8b8b98;">Fax</div>
<div class="t" style="left:551px;width:150px;text-align:right;top:179px;font-size:10.3px;color:#8b8b98;">Email</div>
<div class="t" style="left:551px;width:150px;text-align:right;top:199px;font-size:10.3px;color:#8b8b98;">Terms</div>
<div class="t" style="left:551px;width:150px;text-align:right;top:219px;font-size:10.3px;color:#8b8b98;">Price Level</div>
<div class="t" style="left:709px;top:99px;font-size:10.6px;color:#111;">Bob Smith</div>
<div class="t" style="left:709px;top:139px;font-size:10.6px;color:#111;">02 91235 4548</div>
<div class="t" style="left:709px;top:179px;font-size:10.6px;color:#111;">bobsmith@whatever.com</div>
<div class="t" style="left:935px;top:73px;font-size:11.8px;color:#123e80;font-weight:bold;">Reports for this Customer</div>
<div class="a" style="left:931px;top:91px;width:155px;height:1px;background:#a9c5e2"></div>
<div class="a" style="left:936px;top:103px;width:4px;height:4px;background:#97a9c4"></div>
<div class="t" style="left:947px;top:99px;font-size:10.6px;color:#1a3c9c;text-decoration:underline;text-underline-offset:1px;text-decoration-skip-ink:none">FastReport</div>
<div class="a" style="left:936px;top:126px;width:4px;height:4px;background:#97a9c4"></div>
<div class="t" style="left:947px;top:122px;font-size:10.6px;color:#1a3c9c;text-decoration:underline;text-underline-offset:1px;text-decoration-skip-ink:none">Open Balance</div>
<div class="a" style="left:936px;top:149px;width:4px;height:4px;background:#97a9c4"></div>
<div class="t" style="left:947px;top:145px;font-size:10.6px;color:#1a3c9c;text-decoration:underline;text-underline-offset:1px;text-decoration-skip-ink:none">Show Estimates</div>
<div class="a" style="left:1089px;top:63px;width:17px;height:219px;background:#fff;border-left:1px solid #d6d6d6"></div>
<div class="a" style="left:1089px;top:63px;width:17px;height:17px;background:#fff;border:1px solid #cfcfcf"></div>
<svg class="a" style="left:1093px;top:69px;" width="9" height="6" viewBox="0 0 9 6"><path d="M1 5 L4.5 1.5 L8 5" stroke="#555" stroke-width="1.3" fill="none"/></svg>
<div class="a" style="left:1089px;top:80px;width:17px;height:167px;background:#dcdcdc;border:1px solid #a4a4a4"></div>
<div class="a" style="left:1094px;top:160px;width:7px;height:2px;background:#606060"></div>
<div class="a" style="left:1094px;top:163px;width:7px;height:2px;background:#606060"></div>
<div class="a" style="left:1094px;top:166px;width:7px;height:2px;background:#606060"></div>
<div class="a" style="left:1089px;top:264px;width:17px;height:17px;background:#fff;border:1px solid #cfcfcf"></div>
<svg class="a" style="left:1093px;top:270px;" width="9" height="6" viewBox="0 0 9 6"><path d="M1 1 L4.5 4.5 L8 1" stroke="#555" stroke-width="1.3" fill="none"/></svg>
<div class="a" style="left:1106px;top:63px;width:2px;height:501px;background:#eef4fb"></div>
<div class="a" style="left:304px;top:257px;width:617px;height:1px;background:#a9c5e2"></div>
<div class="t" style="left:294px;width:100px;text-align:right;top:265px;font-size:10.3px;color:#8b8b98;">Notes</div>
<div class="a" style="left:845px;top:265px;width:73px;height:17px;background:#dcdcdc;border:1px solid #777;border-bottom:none"></div>
<div class="t" style="left:850px;top:269px;font-size:10.9px;color:#111;">Edit Note<u>s</u>...</div>
<div class="a" style="left:304px;top:282px;width:802px;height:1px;background:#a8a8a8"></div>
<div class="a" style="left:304px;top:283px;width:802px;height:2px;background:#fff"></div>
<div class="a" style="left:304px;top:285px;width:802px;height:1px;background:#c4c4c4"></div>
<div class="a" style="left:304px;top:286px;width:802px;height:1px;background:#7a7a7a"></div>
<div class="a" style="left:304px;top:287px;width:802px;height:1px;background:#636a76"></div>
<div class="a" style="left:304px;top:288px;width:802px;height:29px;background:#dae5f1"></div>
<div class="a" style="left:304px;top:288px;width:802px;height:1px;background:#e2ebf5"></div>
<div class="t" style="left:310px;top:298px;font-size:10.8px;color:#111;">Show</div>
<div class="a" style="left:346px;top:294px;width:138px;height:19px;background:#fff;border:1px solid #aba4ad"></div>
<div class="t" style="left:350px;top:298px;font-size:10.8px;color:#111;">Sales Orders</div>
<svg class="a" style="left:470px;top:302px;shape-rendering:crispEdges" width="7" height="6" viewBox="0 0 7 6"><rect x="0" y="0" width="1" height="1" fill="#4a4a4a"/><rect x="6" y="0" width="1" height="1" fill="#4a4a4a"/><rect x="0" y="1" width="1" height="1" fill="#4a4a4a"/><rect x="1" y="1" width="1" height="1" fill="#4a4a4a"/><rect x="5" y="1" width="1" height="1" fill="#4a4a4a"/><rect x="6" y="1" width="1" height="1" fill="#4a4a4a"/><rect x="1" y="2" width="1" height="1" fill="#4a4a4a"/><rect x="2" y="2" width="1" height="1" fill="#4a4a4a"/><rect x="4" y="2" width="1" height="1" fill="#4a4a4a"/><rect x="5" y="2" width="1" height="1" fill="#4a4a4a"/><rect x="2" y="3" width="1" height="1" fill="#4a4a4a"/><rect x="3" y="3" width="1" height="1" fill="#4a4a4a"/><rect x="4" y="3" width="1" height="1" fill="#4a4a4a"/><rect x="3" y="4" width="1" height="1" fill="#4a4a4a"/><rect x="3" y="5" width="1" height="1" fill="#4a4a4a"/><rect x="2" y="4" width="1" height="1" fill="#9a9a9a"/><rect x="4" y="4" width="1" height="1" fill="#9a9a9a"/></svg>
<div class="t" style="left:495px;top:298px;font-size:10.8px;color:#111;">Filter By</div>
<div class="a" style="left:542px;top:294px;width:142px;height:19px;background:#fff;border:1px solid #aba4ad"></div>
<div class="t" style="left:546px;top:298px;font-size:10.8px;color:#111;">All Sales Orders</div>
<svg class="a" style="left:670px;top:302px;shape-rendering:crispEdges" width="7" height="6" viewBox="0 0 7 6"><rect x="0" y="0" width="1" height="1" fill="#4a4a4a"/><rect x="6" y="0" width="1" height="1" fill="#4a4a4a"/><rect x="0" y="1" width="1" height="1" fill="#4a4a4a"/><rect x="1" y="1" width="1" height="1" fill="#4a4a4a"/><rect x="5" y="1" width="1" height="1" fill="#4a4a4a"/><rect x="6" y="1" width="1" height="1" fill="#4a4a4a"/><rect x="1" y="2" width="1" height="1" fill="#4a4a4a"/><rect x="2" y="2" width="1" height="1" fill="#4a4a4a"/><rect x="4" y="2" width="1" height="1" fill="#4a4a4a"/><rect x="5" y="2" width="1" height="1" fill="#4a4a4a"/><rect x="2" y="3" width="1" height="1" fill="#4a4a4a"/><rect x="3" y="3" width="1" height="1" fill="#4a4a4a"/><rect x="4" y="3" width="1" height="1" fill="#4a4a4a"/><rect x="3" y="4" width="1" height="1" fill="#4a4a4a"/><rect x="3" y="5" width="1" height="1" fill="#4a4a4a"/><rect x="2" y="4" width="1" height="1" fill="#9a9a9a"/><rect x="4" y="4" width="1" height="1" fill="#9a9a9a"/></svg>
<div class="t" style="left:696px;top:298px;font-size:10.8px;color:#111;">Date</div>
<div class="a" style="left:729px;top:294px;width:142px;height:19px;background:#fff;border:1px solid #aba4ad"></div>
<div class="t" style="left:733px;top:298px;font-size:10.8px;color:#111;">All</div>
<svg class="a" style="left:857px;top:302px;shape-rendering:crispEdges" width="7" height="6" viewBox="0 0 7 6"><rect x="0" y="0" width="1" height="1" fill="#4a4a4a"/><rect x="6" y="0" width="1" height="1" fill="#4a4a4a"/><rect x="0" y="1" width="1" height="1" fill="#4a4a4a"/><rect x="1" y="1" width="1" height="1" fill="#4a4a4a"/><rect x="5" y="1" width="1" height="1" fill="#4a4a4a"/><rect x="6" y="1" width="1" height="1" fill="#4a4a4a"/><rect x="1" y="2" width="1" height="1" fill="#4a4a4a"/><rect x="2" y="2" width="1" height="1" fill="#4a4a4a"/><rect x="4" y="2" width="1" height="1" fill="#4a4a4a"/><rect x="5" y="2" width="1" height="1" fill="#4a4a4a"/><rect x="2" y="3" width="1" height="1" fill="#4a4a4a"/><rect x="3" y="3" width="1" height="1" fill="#4a4a4a"/><rect x="4" y="3" width="1" height="1" fill="#4a4a4a"/><rect x="3" y="4" width="1" height="1" fill="#4a4a4a"/><rect x="3" y="5" width="1" height="1" fill="#4a4a4a"/><rect x="2" y="4" width="1" height="1" fill="#9a9a9a"/><rect x="4" y="4" width="1" height="1" fill="#9a9a9a"/></svg>
<div class="a" style="left:303px;top:317px;width:803px;height:245px;background:#fff;border-top:1px solid #8d8997;border-right:1px solid #8d8997;border-bottom:1px solid #77737f"></div>
<div class="a" style="left:305px;top:356px;width:800px;height:20px;background:#ebf3fc"></div>
<div class="a" style="left:305px;top:396px;width:800px;height:20px;background:#ebf3fc"></div>
<div class="a" style="left:305px;top:436px;width:800px;height:20px;background:#ebf3fc"></div>
<div class="a" style="left:305px;top:476px;width:800px;height:20px;background:#ebf3fc"></div>
<div class="a" style="left:305px;top:516px;width:800px;height:20px;background:#ebf3fc"></div>
<div class="a" style="left:305px;top:556px;width:800px;height:5px;background:#ebf3fc"></div>
<div class="a" style="left:305px;top:318px;width:104px;height:18px;background:#fafafa;border:1px solid #e2e2e2;border-top-color:#fff;"></div>
<div class="a" style="left:409px;top:318px;width:105px;height:18px;background:#fafafa;border:1px solid #e2e2e2;border-top-color:#fff;border-left:2px solid #dadada;"></div>
<div class="a" style="left:409px;top:336px;width:1px;height:225px;background:#ebebeb"></div>
<div class="a" style="left:514px;top:318px;width:105px;height:18px;background:#fafafa;border:1px solid #e2e2e2;border-top-color:#fff;border-left:2px solid #dadada;"></div>
<div class="a" style="left:514px;top:336px;width:1px;height:225px;background:#ebebeb"></div>
<div class="a" style="left:619px;top:318px;width:157px;height:18px;background:#fafafa;border:1px solid #e2e2e2;border-top-color:#fff;border-left:2px solid #dadada;"></div>
<div class="a" style="left:619px;top:336px;width:1px;height:225px;background:#ebebeb"></div>
<div class="a" style="left:776px;top:318px;width:328px;height:18px;background:#fafafa;border:1px solid #e2e2e2;border-top-color:#fff;border-left:2px solid #dadada;"></div>
<div class="a" style="left:776px;top:336px;width:1px;height:225px;background:#ebebeb"></div>
<div class="t" style="left:310px;top:322px;font-size:10.8px;color:#111;">Num</div>
<div class="t" style="left:415px;top:322px;font-size:10.8px;color:#111;">Date</div>
<svg class="a" style="left:448px;top:325px;shape-rendering:crispEdges" width="7" height="4" viewBox="0 0 7 4"><rect x="0" y="0" width="7" height="1" fill="#000"/><rect x="1" y="1" width="5" height="1" fill="#000"/><rect x="2" y="2" width="3" height="1" fill="#000"/><rect x="3" y="3" width="1" height="1" fill="#000"/></svg>
<div class="t" style="left:521px;top:322px;font-size:10.8px;color:#111;">Amount</div>
<div class="t" style="left:626px;top:322px;font-size:10.8px;color:#111;">Open Balance</div>
<div class="t" style="left:782px;top:322px;font-size:10.8px;color:#111;">Memo</div>
<div class="t" style="left:468px;top:340px;font-size:10.86px;color:#111;">There are no transactions of type "Sales Orders", filtered by "All Sales Orders", in date range "All".</div>
</body></html>
